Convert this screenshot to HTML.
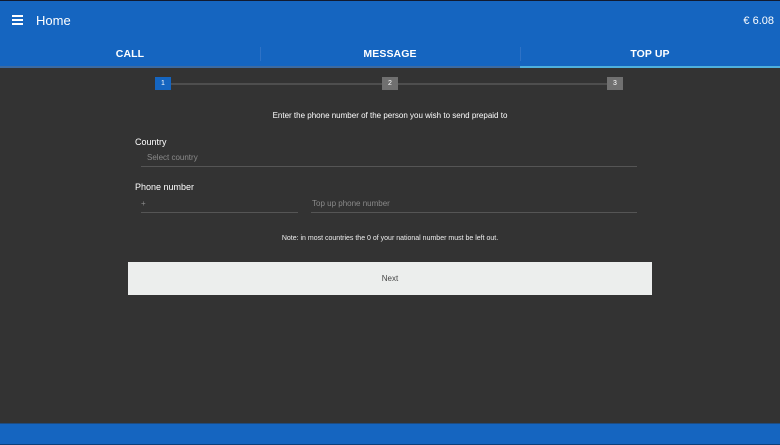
<!DOCTYPE html>
<html><head><meta charset="utf-8"><style>
*{margin:0;padding:0;box-sizing:border-box}
body{width:780px;height:445px;background:#333333;font-family:"Liberation Sans",sans-serif;position:relative;overflow:hidden;color:#fff}
.top{position:absolute;left:0;top:0;width:780px;height:1px;background:#111a30}
.hdr{position:absolute;left:0;top:1px;width:780px;height:65px;background:#1565c0}
.ul{position:absolute;top:66px;height:2px}
.abs{position:absolute}
.tab{position:absolute;top:48px;font-size:10.5px;font-weight:bold;width:260px;text-align:center;letter-spacing:.1px}
.sep{position:absolute;top:47px;width:1px;height:14px;background:#2e72c6}
.step{position:absolute;top:77px;width:16px;height:13px;font-size:7px;text-align:center;line-height:13px}
.line{position:absolute;height:1px;background:#4a4a4a}
.lbl{position:absolute;font-size:9px;color:#fff}
.ph{position:absolute;font-size:8px;color:#8a8a8a}
</style></head><body>
<div class="top"></div>
<div class="hdr"></div>
<div class="ul" style="left:0;width:520px;background:#3d6aa0"></div>
<div class="ul" style="left:520px;width:260px;background:#4fb0dc"></div>
<div class="abs" style="left:12px;top:15px;width:11px;height:2px;background:#fff"></div>
<div class="abs" style="left:12px;top:19px;width:11px;height:2px;background:#fff"></div>
<div class="abs" style="left:12px;top:23px;width:11px;height:2px;background:#fff"></div>
<div class="abs" style="left:36px;top:13px;font-size:13px">Home</div>
<div class="abs" style="right:6px;top:15px;font-size:11px">€ 6.08</div>
<div class="tab" style="left:0">CALL</div>
<div class="sep" style="left:260px"></div>
<div class="tab" style="left:260px">MESSAGE</div>
<div class="sep" style="left:520px"></div>
<div class="tab" style="left:520px">TOP UP</div>
<div class="abs" style="left:170px;top:83px;width:440px;height:2px;background:#4e4e4e"></div>
<div class="step" style="left:155px;background:#1565c0">1</div>
<div class="step" style="left:382px;background:#707070">2</div>
<div class="step" style="left:607px;background:#707070">3</div>
<div class="abs" style="left:0;width:780px;top:111px;text-align:center;font-size:8px;line-height:10px">Enter the phone number of the person you wish to send prepaid to</div>
<div class="lbl" style="left:135px;top:137px">Country</div>
<div class="ph" style="left:147px;top:153px">Select country</div>
<div class="line" style="left:141px;top:166px;width:496px;background:#555"></div>
<div class="lbl" style="left:135px;top:182px">Phone number</div>
<div class="ph" style="left:141px;top:199px">+</div>
<div class="line" style="left:141px;top:212px;width:157px;background:#555"></div>
<div class="ph" style="left:312px;top:199px">Top up phone number</div>
<div class="line" style="left:311px;top:212px;width:326px;background:#555"></div>
<div class="abs" style="left:0;width:780px;top:234px;text-align:center;font-size:7px;line-height:9px;color:#eee">Note: in most countries the 0 of your national number must be left out.</div>
<div class="abs" style="left:128px;top:262px;width:524px;height:33px;background:#eceeed;color:#444;font-size:8px;text-align:center;line-height:33px">Next</div>
<div class="abs" style="left:0;top:423px;width:780px;height:1px;background:#1f4c80"></div>
<div class="abs" style="left:0;top:424px;width:780px;height:20px;background:#1565c0"></div>
<div class="abs" style="left:0;top:444px;width:780px;height:1px;background:#0d3f7a"></div>
</body></html>
